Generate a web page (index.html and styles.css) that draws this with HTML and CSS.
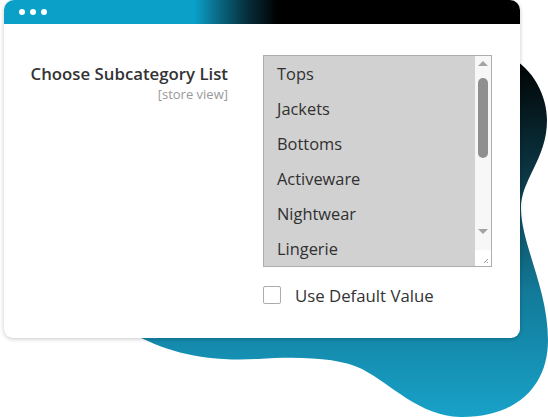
FILE: index.html
```html
<!DOCTYPE html>
<html>
<head>
<meta charset="utf-8">
<link rel="stylesheet" href="styles.css">
</head>
<body>
<div class="stage">
  <svg class="blob" width="548" height="418" viewBox="0 0 548 418" aria-hidden="true">
    <defs>
      <linearGradient id="bg" x1="0" y1="55" x2="0" y2="418" gradientUnits="userSpaceOnUse">
        <stop offset="0" stop-color="#000000"/>
        <stop offset="0.35" stop-color="#0c3a48"/>
        <stop offset="0.65" stop-color="#127a98"/>
        <stop offset="1" stop-color="#18a2c9"/>
      </linearGradient>
    </defs>
    <path fill="url(#bg)" d="M480 50 C525 50 547 90 547 120 C547 160 520 180 521 210 C522 245 548 290 548 340 C548 390 512 418 460 417 C420 416 392 385 362 369 C340 358 300 356 258 359 C205 362 165 352 130 332 L130 50 Z"/>
  </svg>
  <div class="window">
    <div class="titlebar">
      <span class="dot"></span><span class="dot"></span><span class="dot"></span>
    </div>
    <div class="content">
      <div class="label-col">
        <div class="label">Choose Subcategory List</div>
        <div class="scope">[store view]</div>
      </div>
      <div class="control-col">
        <div class="listbox">
          <ul class="options">
            <li>Tops</li>
            <li>Jackets</li>
            <li>Bottoms</li>
            <li>Activeware</li>
            <li>Nightwear</li>
            <li>Lingerie</li>
          </ul>
          <div class="scrollbar">
            <span class="arrow up"></span>
            <span class="thumb"></span>
            <span class="arrow down"></span>
            <span class="grip">
              <svg width="16" height="16" viewBox="0 0 16 16"><path d="M13 9 L9 13 M13 12 L12 13" stroke="#9a9a9a" stroke-width="1"/></svg>
            </span>
          </div>
        </div>
        <label class="default">
          <span class="checkbox"></span>
          <span class="default-text">Use Default Value</span>
        </label>
      </div>
    </div>
  </div>
</div>
</body>
</html>
```

FILE: styles.css
```css
* { box-sizing: border-box; }
html, body {
  margin: 0;
  padding: 0;
  background: #ffffff;
}
body {
  font-family: "Open Sans", "DejaVu Sans", sans-serif;
  color: #303030;
}
.stage {
  position: relative;
  width: 548px;
  height: 418px;
  overflow: hidden;
}
.blob {
  position: absolute;
  left: 0;
  top: 0;
}
.window {
  position: relative;
  margin-left: 4px;
  width: 516px;
  height: 338px;
  background: #ffffff;
  border-radius: 10px 10px 9px 9px;
  box-shadow: 0 1px 4px rgba(0, 0, 0, 0.22);
}
.titlebar {
  height: 24px;
  border-radius: 10px 10px 0 0;
  background: linear-gradient(90deg, #0aa0c8 0%, #0aa0c8 37%, #0a6f8c 41%, #06303d 47%, #000000 53%, #000000 100%);
  display: flex;
  align-items: center;
  gap: 5px;
  padding-left: 15px;
}
.dot {
  width: 6px;
  height: 6px;
  border-radius: 50%;
  background: #ffffff;
}
.content {
  display: flex;
  padding-top: 31px;
}
.label-col {
  width: 224px;
  text-align: right;
  padding-top: 7px;
}
.label {
  font-size: 16.8px;
  font-weight: 600;
  line-height: 24px;
  color: #333333;
}
.scope {
  font-size: 13px;
  line-height: 16px;
  color: #999999;
}
.control-col {
  margin-left: 35px;
  display: flex;
  flex-direction: column;
}
.listbox {
  width: 229px;
  height: 212px;
  border: 1px solid #adadad;
  background: #d1d1d1;
  display: flex;
}
.options {
  list-style: none;
  margin: 0;
  padding: 0 0 0 13px;
  flex: 1;
}
.options li {
  height: 35px;
  line-height: 36px;
  font-size: 16.4px;
  color: #303030;
}
.scrollbar {
  width: 16px;
  background: #f7f7f7;
  display: flex;
  flex-direction: column;
  align-items: center;
}
.arrow {
  width: 0;
  height: 0;
  border-left: 5px solid transparent;
  border-right: 5px solid transparent;
}
.arrow.up {
  margin-top: 5px;
  border-bottom: 5px solid #a3a3a3;
}
.arrow.down {
  margin-top: 71px;
  border-top: 5px solid #a3a3a3;
}
.thumb {
  margin-top: 12px;
  width: 10px;
  height: 80px;
  border-radius: 5px;
  background: #8f8f8f;
}
.grip {
  margin-top: auto;
  width: 16px;
  height: 16px;
  display: block;
  background: #ffffff;
}
.grip svg { display: block; }
.default {
  display: flex;
  align-items: center;
  margin-top: 16px;
  height: 24px;
}
.checkbox {
  width: 18px;
  height: 18px;
  border: 1px solid #adadad;
  border-radius: 2px;
  background: #ffffff;
}
.default-text {
  margin-left: 14px;
  font-size: 16.8px;
  color: #333333;
}
```
